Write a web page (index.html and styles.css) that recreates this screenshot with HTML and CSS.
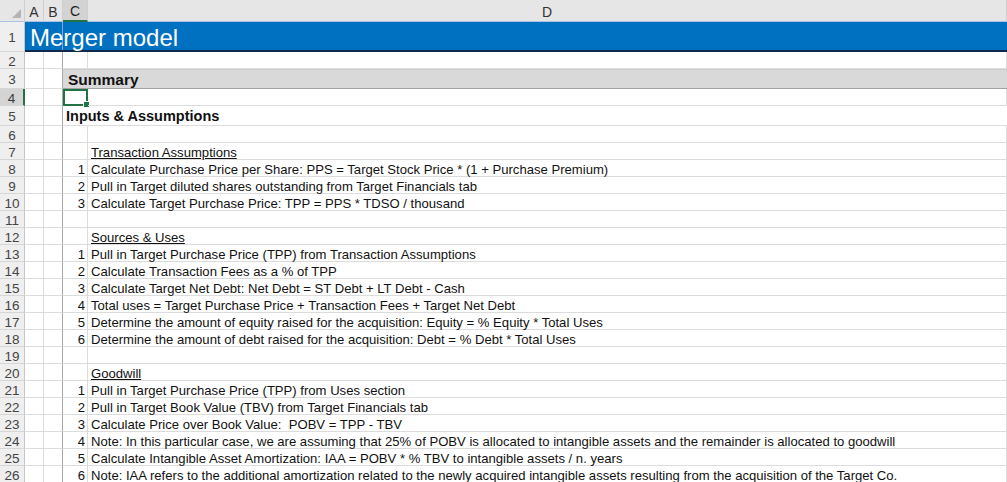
FILE: index.html
```html
<!DOCTYPE html>
<html lang="en">
<head>
    <meta charset="UTF-8">
    <title>Merger model</title>
    <link rel="stylesheet" href="styles.css">
</head>
<body>
    <div class="sheet">
        <!-- Column headers -->
        <div class="row head">
            <div class="cell rh corner"><span class="tri"></span></div>
            <div class="cell ch">A</div>
            <div class="cell ch colb">B</div>
            <div class="cell ch active">C</div>
            <div class="cell ch">D</div>
        </div>

        <!-- Title -->
        <div class="row r-title">
            <div class="cell rh">1</div>
            <div class="cell title-cell">Merger model</div>
        </div>

        <div class="row"><div class="cell rh">2</div><div class="cell"></div><div class="cell colb"></div><div class="cell"></div><div class="cell"></div></div>

        <div class="row r-tall">
            <div class="cell rh">3</div><div class="cell"></div><div class="cell colb"></div>
            <div class="cell section">Summary</div>
        </div>

        <div class="row">
            <div class="cell rh rh-active">4</div><div class="cell"></div><div class="cell colb"></div>
            <div class="cell selected"><span class="handle"></span></div><div class="cell"></div>
        </div>

        <div class="row r-tall">
            <div class="cell rh">5</div><div class="cell"></div><div class="cell colb"></div>
            <div class="cell heading">Inputs &amp; Assumptions</div>
        </div>

        <div class="row"><div class="cell rh">6</div><div class="cell"></div><div class="cell colb"></div><div class="cell"></div><div class="cell"></div></div>

        <div class="row"><div class="cell rh">7</div><div class="cell"></div><div class="cell colb"></div><div class="cell"></div><div class="cell txt"><u>Transaction Assumptions</u></div></div>
        <div class="row"><div class="cell rh">8</div><div class="cell"></div><div class="cell colb"></div><div class="cell num">1</div><div class="cell txt">Calculate Purchase Price per Share: PPS = Target Stock Price * (1 + Purchase Premium)</div></div>
        <div class="row"><div class="cell rh">9</div><div class="cell"></div><div class="cell colb"></div><div class="cell num">2</div><div class="cell txt">Pull in Target diluted shares outstanding from Target Financials tab</div></div>
        <div class="row"><div class="cell rh">10</div><div class="cell"></div><div class="cell colb"></div><div class="cell num">3</div><div class="cell txt">Calculate Target Purchase Price: TPP = PPS * TDSO / thousand</div></div>
        <div class="row"><div class="cell rh">11</div><div class="cell"></div><div class="cell colb"></div><div class="cell"></div><div class="cell"></div></div>

        <div class="row"><div class="cell rh">12</div><div class="cell"></div><div class="cell colb"></div><div class="cell"></div><div class="cell txt"><u>Sources &amp; Uses</u></div></div>
        <div class="row"><div class="cell rh">13</div><div class="cell"></div><div class="cell colb"></div><div class="cell num">1</div><div class="cell txt">Pull in Target Purchase Price (TPP) from Transaction Assumptions</div></div>
        <div class="row"><div class="cell rh">14</div><div class="cell"></div><div class="cell colb"></div><div class="cell num">2</div><div class="cell txt">Calculate Transaction Fees as a % of TPP</div></div>
        <div class="row"><div class="cell rh">15</div><div class="cell"></div><div class="cell colb"></div><div class="cell num">3</div><div class="cell txt">Calculate Target Net Debt: Net Debt = ST Debt + LT Debt - Cash</div></div>
        <div class="row"><div class="cell rh">16</div><div class="cell"></div><div class="cell colb"></div><div class="cell num">4</div><div class="cell txt">Total uses = Target Purchase Price + Transaction Fees + Target Net Debt</div></div>
        <div class="row"><div class="cell rh">17</div><div class="cell"></div><div class="cell colb"></div><div class="cell num">5</div><div class="cell txt">Determine the amount of equity raised for the acquisition: Equity = % Equity * Total Uses</div></div>
        <div class="row"><div class="cell rh">18</div><div class="cell"></div><div class="cell colb"></div><div class="cell num">6</div><div class="cell txt">Determine the amount of debt raised for the acquisition: Debt = % Debt * Total Uses</div></div>
        <div class="row"><div class="cell rh">19</div><div class="cell"></div><div class="cell colb"></div><div class="cell"></div><div class="cell"></div></div>

        <div class="row"><div class="cell rh">20</div><div class="cell"></div><div class="cell colb"></div><div class="cell"></div><div class="cell txt"><u>Goodwill</u></div></div>
        <div class="row"><div class="cell rh">21</div><div class="cell"></div><div class="cell colb"></div><div class="cell num">1</div><div class="cell txt">Pull in Target Purchase Price (TPP) from Uses section</div></div>
        <div class="row"><div class="cell rh">22</div><div class="cell"></div><div class="cell colb"></div><div class="cell num">2</div><div class="cell txt">Pull in Target Book Value (TBV) from Target Financials tab</div></div>
        <div class="row"><div class="cell rh">23</div><div class="cell"></div><div class="cell colb"></div><div class="cell num">3</div><div class="cell txt">Calculate Price over Book Value:&nbsp; POBV = TPP - TBV</div></div>
        <div class="row"><div class="cell rh">24</div><div class="cell"></div><div class="cell colb"></div><div class="cell num">4</div><div class="cell txt">Note: In this particular case, we are assuming that 25% of POBV is allocated to intangible assets and the remainder is allocated to goodwill</div></div>
        <div class="row"><div class="cell rh">25</div><div class="cell"></div><div class="cell colb"></div><div class="cell num">5</div><div class="cell txt">Calculate Intangible Asset Amortization: IAA = POBV * % TBV to intangible assets / n. years</div></div>
        <div class="row"><div class="cell rh">26</div><div class="cell"></div><div class="cell colb"></div><div class="cell num">6</div><div class="cell txt">Note: IAA refers to the additional amortization related to the newly acquired intangible assets resulting from the acquisition of the Target Co.</div></div>
    </div>
</body>
</html>
```

FILE: styles.css
```css
/* Page */
body {
    margin: 0;
    background: #ffffff;
    font-family: "Liberation Sans", Arial, sans-serif;
    overflow: hidden;
}

.sheet {
    width: 1007px;
    height: 482px;
    overflow: hidden;
}

/* Rows: row header, A, B, C, D */
.row {
    display: grid;
    grid-template-columns: 25px 19px 19px 25px 1fr;
    grid-template-rows: 100%;
    height: 17px;
}

.row.head {
    height: 22px;
}

.row.r-title {
    height: 30px;
}

.row.r-tall {
    height: 20px;
}

.cell {
    box-sizing: border-box;
    border-right: 1px solid #dcdcdc;
    border-bottom: 1px solid #dcdcdc;
    font-size: 13.1px;
    line-height: 20px;
    color: #111;
    white-space: nowrap;
    position: relative;
    min-height: 0;
}

.cell.colb {
    border-right-color: #a8a8a8;
}

/* Row and column headers */
.rh {
    background: #efefef;
    border-right: 1px solid #c6c6c6;
    border-bottom: 1px solid #d6d6d6;
    color: #444;
    font-size: 13.5px;
    line-height: 16px;
    padding-top: 3px;
    text-align: center;
    display: flex;
    align-items: center;
    justify-content: center;
}

.rh-active {
    background: #d4d4d4;
    color: #3a3a3a;
    border-right: 2px solid #217346;
}

.head .cell {
    background: #e6e6e6;
    border-right: 1px solid #cfcfcf;
    border-bottom: 1px solid #a9c4e2;
    color: #333;
    font-size: 14px;
    line-height: 16px;
    padding-top: 2px;
    display: flex;
    align-items: center;
    justify-content: center;
}

.head .ch.active {
    background: #d3d3d3;
    border-bottom: 2px solid #217346;
    color: #1e1e1e;
}

.corner .tri {
    position: absolute;
    right: 3px;
    bottom: 3px;
    width: 0;
    height: 0;
    border-left: 9px solid transparent;
    border-bottom: 9px solid #b4b4b4;
}

/* Title bar */
.title-cell {
    grid-column: 2 / 6;
    background: #0070c0;
    border-right: none;
    border-bottom: 2px solid #13294b;
    color: #fff;
    font-size: 24px;
    line-height: 32px;
    padding-left: 5px;
    background-image: linear-gradient(#7fa8d8, #7fa8d8);
    background-size: 1px 100%;
    background-position: 37px 0;
    background-repeat: no-repeat;
}

/* Summary bar */
.section {
    grid-column: 4 / 6;
    background: #d9d9d9;
    border-top: 1px solid #cfcfcf;
    border-bottom: 1px solid #a2a2a2;
    border-right: none;
    font-weight: bold;
    font-size: 15.5px;
    line-height: 20px;
    padding-left: 5px;
}

.heading {
    grid-column: 4 / 6;
    border-right: none;
    font-weight: bold;
    font-size: 14.5px;
    line-height: 20px;
    padding-left: 3px;
}

/* Cells */
.num {
    text-align: right;
    padding-right: 2px;
}

.txt {
    padding-left: 3px;
}

.selected {
    border: 2px solid #217346;
}

.selected .handle {
    position: absolute;
    right: -4px;
    bottom: -4px;
    width: 5px;
    height: 5px;
    background: #217346;
    border: 1px solid #fff;
}
```
